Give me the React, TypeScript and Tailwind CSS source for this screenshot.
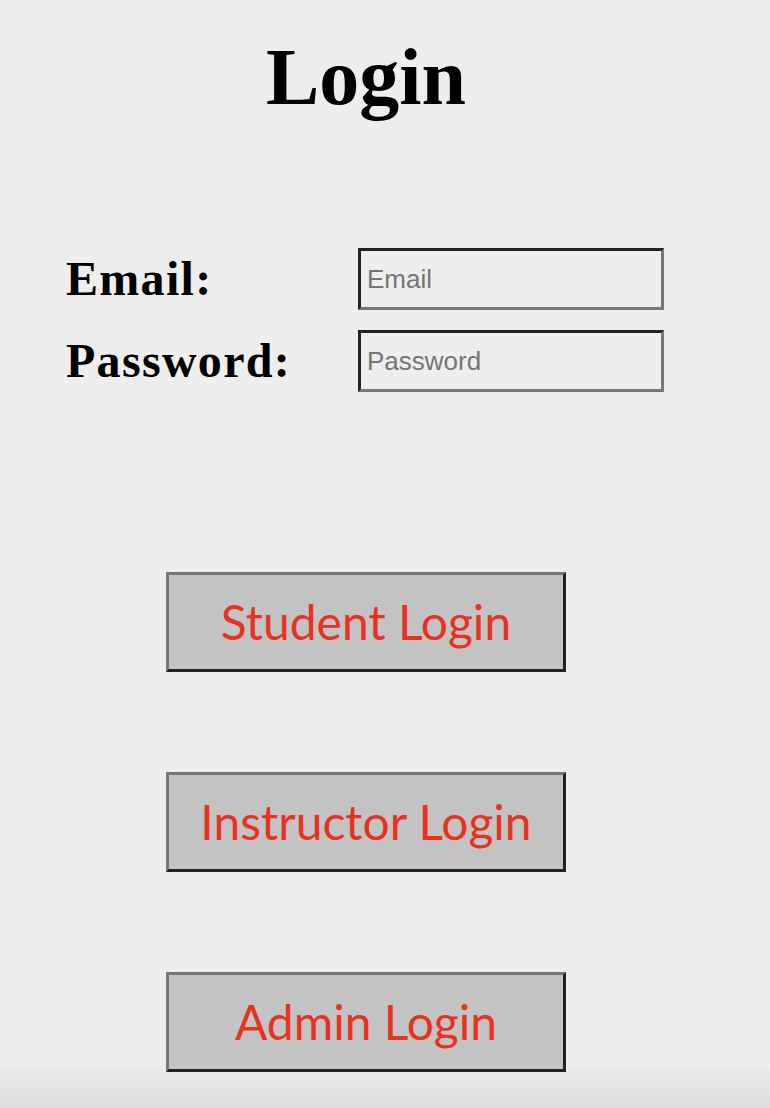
export default function App() {
  const inputCls =
    "w-[306px] h-[62px] border-[3px] border-solid border-t-[#222222] border-l-[#222222] border-b-[#777777] border-r-[#777777] bg-[#eeeeee] pl-[6px] text-[26px] text-black placeholder:text-[#757575] outline-none font-['Liberation_Sans',Arial,sans-serif]";
  const buttonCls =
    "w-[400px] h-[100px] border-[3px] border-solid border-t-[#777777] border-l-[#777777] border-b-[#222222] border-r-[#222222] bg-[#c3c3c3] text-[#e8321f] text-[48px] font-['Lato',sans-serif] flex items-center justify-center";
  const labelCls = "w-[292px] text-[48px] leading-none tracking-[1.3px] font-bold text-black";

  return (
    <div className="min-h-screen bg-[linear-gradient(to_bottom,#eeeeee_1062px,#dcdcdc_1108px)] font-['Liberation_Serif',serif]">
      <div className="w-[732px] flex flex-col items-center pt-[37px] pb-[36px]">
        <h1 className="text-[80px] leading-none font-bold text-black">Login</h1>

        <form className="self-stretch pl-[66px] mt-[131px] flex flex-col gap-[20px]">
          <div className="flex items-center">
            <label className={labelCls}>Email:</label>
            <input type="email" placeholder="Email" className={inputCls} />
          </div>
          <div className="flex items-center">
            <label className={labelCls}>Password:</label>
            <input type="password" placeholder="Password" className={inputCls} />
          </div>
        </form>

        <div className="mt-[180px] flex flex-col gap-[100px]">
          <button type="button" className={buttonCls}>Student Login</button>
          <button type="button" className={buttonCls}>Instructor Login</button>
          <button type="button" className={buttonCls}>Admin Login</button>
        </div>
      </div>
    </div>
  );
}
